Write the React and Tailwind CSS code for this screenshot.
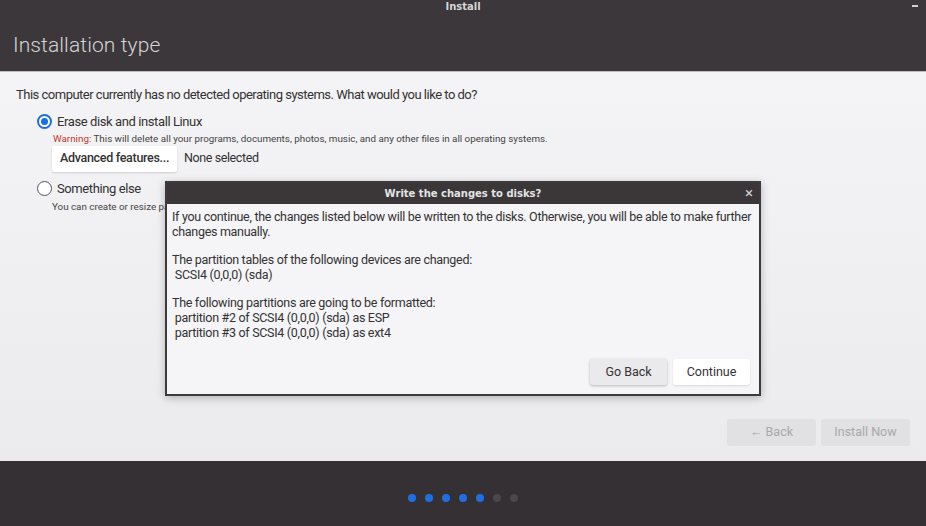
import React from 'react';

const ui = { fontFamily: 'Roboto, "Liberation Sans", sans-serif' };
const bold = { fontFamily: '"DejaVu Sans", "Liberation Sans", sans-serif' };

function Radio({ checked }) {
  return checked ? (
    <span className="w-[15px] h-[15px] rounded-full border-[2px] border-[#1a6fe0] bg-white flex items-center justify-center shrink-0">
      <span className="w-[7px] h-[7px] rounded-full bg-[#1a6fe0]" />
    </span>
  ) : (
    <span className="w-[15px] h-[15px] rounded-full border-[1.5px] border-[#555] bg-white shrink-0" />
  );
}

function Dialog() {
  return (
    <div className="absolute left-[165px] top-[109px] w-[596px] h-[215px] flex flex-col border-[2px] border-[#3d3a3c] bg-[#f5f4f6] shadow-[0_2px_8px_rgba(0,0,0,0.25)]">
      <div className="h-[21px] bg-[#3b3739] flex items-center justify-center relative shrink-0">
        <span style={bold} className="text-[10px] font-bold text-[#e4e4e4]">Write the changes to disks?</span>
        <span className="absolute right-[6px] top-[1px] text-[15px] leading-[18px] text-[#cfcfcf]">×</span>
      </div>
      <div style={ui} className="flex-1 flex flex-col px-[5px] pt-[6px] text-[12.5px] leading-[14.6px] tracking-[-0.3px] text-[#333]">
        <p>If you continue, the changes listed below will be written to the disks. Otherwise, you will be able to make further changes manually.</p>
        <p className="mt-[14px]">The partition tables of the following devices are changed:</p>
        <p>&nbsp;SCSI4 (0,0,0) (sda)</p>
        <p className="mt-[14px]">The following partitions are going to be formatted:</p>
        <p>&nbsp;partition #2 of SCSI4 (0,0,0) (sda) as ESP</p>
        <p>&nbsp;partition #3 of SCSI4 (0,0,0) (sda) as ext4</p>
        <div className="mt-auto mb-[9px] flex justify-end gap-[6px] pr-[4px] tracking-normal">
          <button className="w-[77px] h-[26px] rounded-[3px] bg-[#eae9eb] text-[12.5px] text-[#333] shadow-[0_1px_3px_rgba(0,0,0,0.25)]">Go Back</button>
          <button className="w-[77px] h-[26px] rounded-[3px] bg-white text-[12.5px] text-[#333] shadow-[0_1px_2px_rgba(0,0,0,0.12)]">Continue</button>
        </div>
      </div>
    </div>
  );
}

export default function App() {
  return (
    <div style={ui} className="w-[926px] h-[526px] flex flex-col overflow-hidden bg-[#343033]">
      <header className="h-[72px] bg-[#3b373a] relative shrink-0 border-b border-[#bdbcbe]">
        <div style={bold} className="text-center text-[10px] font-bold text-[#d6d6d6] leading-[13px]">Install</div>
        <span className="absolute right-[8px] top-[5px] w-[6px] h-[2px] bg-[#d0d0d0]" />
        <h1 className="pl-[13px] pt-[20px] text-[21px] font-light text-[#d4d4d4] leading-[24px] tracking-[0.1px]">Installation type</h1>
      </header>

      <main className="relative h-[389px] shrink-0 bg-gradient-to-b from-[#f4f3f5] to-[#ebeaec] flex flex-col px-[16px] pt-[15px] pb-[15px]">
        <p className="text-[13px] leading-[16px] tracking-[-0.5px] text-[#333]">This computer currently has no detected operating systems. What would you like to do?</p>

        <div className="ml-[21px] mt-[9px] flex items-center gap-[5px]">
          <Radio checked />
          <span className="text-[13px] tracking-[-0.4px] text-[#333]">Erase disk and install Linux</span>
        </div>
        <p className="ml-[37px] mt-[1px] text-[9.8px] leading-[12px] text-[#444]">
          <span className="text-[#c0392b]">Warning:</span> This will delete all your programs, documents, photos, music, and any other files in all operating systems.
        </p>
        <div className="ml-[36px] mt-[1px] flex items-center gap-[7px]">
          <button className="w-[125px] h-[26px] bg-white text-[12.5px] font-medium tracking-[-0.3px] text-[#333] rounded-[2px] shadow-[0_1px_2px_rgba(0,0,0,0.15)]">Advanced features...</button>
          <span className="text-[12.5px] tracking-[-0.4px] text-[#333]">None selected</span>
        </div>

        <div className="ml-[21px] mt-[7px] flex items-center gap-[5px]">
          <Radio />
          <span className="text-[13px] tracking-[-0.4px] text-[#333]">Something else</span>
        </div>
        <p className="ml-[36px] mt-[3px] w-[113px] overflow-hidden whitespace-nowrap text-[9.8px] leading-[12px] text-[#444]">You can create or resize partitions yourself, or choose multiple partitions for Linux.</p>

        <div className="mt-auto flex justify-end gap-[5px]">
          <button className="w-[89px] h-[27px] rounded-[3px] bg-[#e1e0e2] text-[12.5px] text-[#a8a8a8]">← Back</button>
          <button className="w-[89px] h-[27px] rounded-[3px] bg-[#e1e0e2] text-[12.5px] text-[#a8a8a8]">Install Now</button>
        </div>

        <Dialog />
      </main>

      <footer className="flex-1 flex items-center justify-center gap-[9px] pt-[8px]">
        {[0, 1, 2, 3, 4].map(i => <span key={i} className="w-[8px] h-[8px] rounded-full bg-[#1f6fe3]" />)}
        {[5, 6].map(i => <span key={i} className="w-[8px] h-[8px] rounded-full bg-[#4a4649]" />)}
      </footer>
    </div>
  );
}
